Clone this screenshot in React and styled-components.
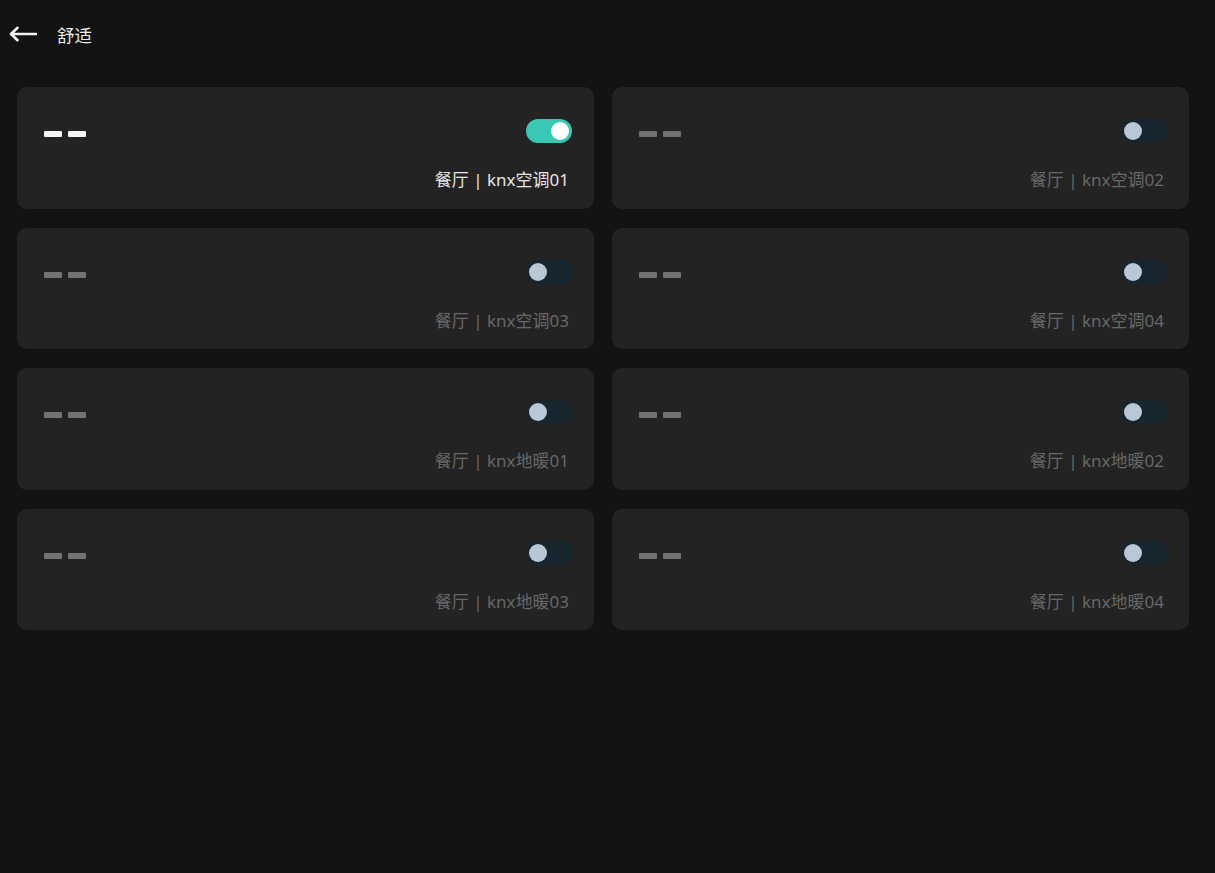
import React, { useState } from "react";
import styled, { createGlobalStyle } from "styled-components";

const GlobalStyle = createGlobalStyle`
  html, body {
    margin: 0;
    padding: 0;
    background: #131313;
    font-family: "Noto Sans", "Noto Sans CJK SC", sans-serif;
  }
`;

const devices = [
  { name: "knx空调01", on: true },
  { name: "knx空调02", on: false },
  { name: "knx空调03", on: false },
  { name: "knx空调04", on: false },
  { name: "knx地暖01", on: false },
  { name: "knx地暖02", on: false },
  { name: "knx地暖03", on: false },
  { name: "knx地暖04", on: false },
];

const App = () => {
  const [items, setItems] = useState(devices);

  const toggle = (i) => {
    setItems(items.map((d, idx) => (idx === i ? { ...d, on: !d.on } : d)));
  };

  return (
    <Page>
      <GlobalStyle />
      <Header>
        <BackButton>
          <svg width="28" height="16" viewBox="0 0 28 16" fill="none">
            <path
              d="M27 8H2.5M8.5 1.8L2 8L8.5 14.2"
              stroke="#f2f2f2"
              strokeWidth="2.6"
              strokeLinecap="round"
              strokeLinejoin="round"
            />
          </svg>
        </BackButton>
        <Title>舒适</Title>
      </Header>

      <Grid>
        {items.map((d, i) => (
          <Card key={d.name}>
            <TopRow>
              <Dashes>
                <Dash $on={d.on} />
                <Dash $on={d.on} />
              </Dashes>
              <Switch $on={d.on} onClick={() => toggle(i)}>
                <Knob $on={d.on} />
              </Switch>
            </TopRow>
            <Label $on={d.on}>餐厅 | {d.name}</Label>
          </Card>
        ))}
      </Grid>
    </Page>
  );
};

export default App;

const Page = styled.div`
  width: 1215px;
  height: 873px;
  background: #131313;
  box-sizing: border-box;
`;

const Header = styled.div`
  display: flex;
  align-items: center;
  height: 68px;
  padding-left: 9px;
`;

const BackButton = styled.div`
  display: flex;
  align-items: center;
  width: 30px;
  height: 20px;
  cursor: pointer;
`;

const Title = styled.span`
  margin-left: 18px;
  font-size: 17.5px;
  color: #ededed;
`;

const Grid = styled.div`
  display: grid;
  grid-template-columns: 577px 577px;
  column-gap: 18px;
  row-gap: 19px;
  padding: 19px 0 0 17px;
`;

const Card = styled.div`
  height: 121.5px;
  box-sizing: border-box;
  background: #232323;
  border-radius: 10px;
  padding: 32px 22px 0 27px;
  display: flex;
  flex-direction: column;
`;

const TopRow = styled.div`
  display: flex;
  align-items: center;
  justify-content: space-between;
  height: 24px;
`;

const Dashes = styled.div`
  display: flex;
  gap: 6px;
  margin-top: 6px;
`;

const Dash = styled.span`
  width: 18px;
  height: 6px;
  border-radius: 1px;
  background: ${(p) => (p.$on ? "#f4f4f4" : "#737373")};
`;

const Switch = styled.div`
  width: 46px;
  height: 24px;
  border-radius: 12px;
  background: ${(p) => (p.$on ? "#3ac7b3" : "#17252f")};
  display: flex;
  align-items: center;
  justify-content: ${(p) => (p.$on ? "flex-end" : "flex-start")};
  padding: 0 3px;
  box-sizing: border-box;
  cursor: pointer;
`;

const Knob = styled.span`
  width: 18px;
  height: 18px;
  border-radius: 50%;
  background: ${(p) => (p.$on ? "#ffffff" : "#b9c7d6")};
`;

const Label = styled.div`
  margin-top: 25px;
  text-align: right;
  font-size: 17px;
  line-height: 24px;
  padding-right: 3px;
  color: ${(p) => (p.$on ? "#e6e6e6" : "#686868")};
`;
